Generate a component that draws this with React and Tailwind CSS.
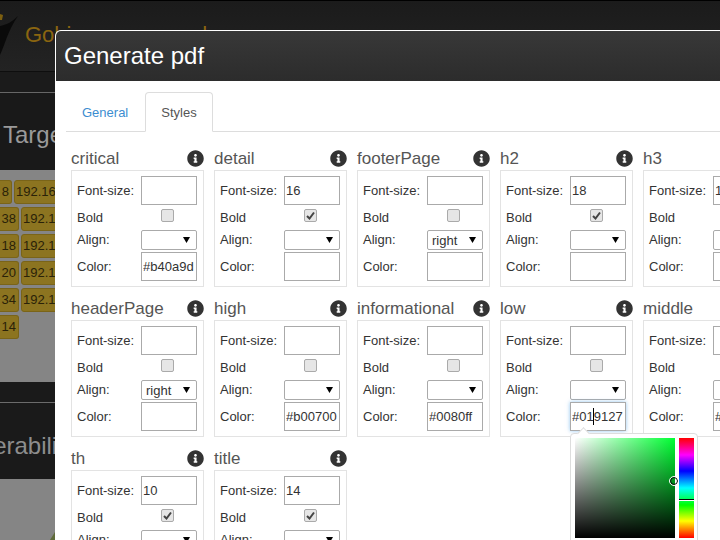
import { FaInfoCircle } from "react-icons/fa";

const styleRows = [
  { name: "critical", color: "#b40a9d" },
  { name: "detail", size: "16", bold: true },
  { name: "footerPage", align: "right" },
  { name: "h2", size: "18", bold: true },
  { name: "h3", size: "16", bold: true },
  { name: "headerPage", align: "right" },
  { name: "high", color: "#b00700" },
  { name: "informational", color: "#0080ff" },
  { name: "low", color: "#019127", picker: true },
  { name: "middle", color: "#ffa500" },
  { name: "th", size: "10", bold: true },
  { name: "title", size: "14", bold: true },
];

const tileRows = [
  { first: "8", w: "w-[12px]", ip: "192.168.1" },
  { first: "38", w: "w-[19px]", ip: "192.168.1" },
  { first: "18", w: "w-[19px]", ip: "192.168.1" },
  { first: "20", w: "w-[19px]", ip: "192.168.1" },
  { first: "34", w: "w-[19px]", ip: "192.168.1" },
  { first: "14", w: "w-[19px]" },
];

function Tile({ className, children }) {
  return (
    <div className={`h-[24px] shrink-0 rounded-[3px] border border-[#7a6418] bg-[#8c7420] text-[13px] leading-[22px] text-[#2a2208] whitespace-nowrap overflow-hidden ${className}`}>
      {children}
    </div>
  );
}

function Background() {
  return (
    <div className="w-[720px] h-[540px] overflow-hidden bg-[#858585]">
      <div className="h-[72px] border-t border-black border-b border-b-[#0e0e0e] bg-linear-to-b from-[#1b1b1b] to-[#232323] flex items-center">
        <svg className="w-[25px] h-[70px] shrink-0" viewBox="0 0 25 70">
          <path d="M0 13 L3 14 L2 19 L0 19 Z" fill="#7d5f10" />
          <path d="M18 15 C12 21 6 24 0 25 L0 54 C5 44 7 31 18 15 Z" fill="#0a0a0a" />
        </svg>
        <span className="w-[215px] shrink-0 text-[22px] text-[#8a6510] whitespace-nowrap -mt-[3px]">Gobierno seguro de</span>
        <nav className="flex gap-[30px] text-[16px] text-[#999] whitespace-nowrap mt-[3px]">
          <span>Vulnerabilities</span>
          <span>Technical overall</span>
          <span>Generate PDF</span>
          <span>Generate report</span>
        </nav>
      </div>
      <div className="h-[21px] bg-[#1b1b1b] border-b border-[#666]" />
      <div className="h-[77px] bg-[#191919] flex items-center pl-[3px] pt-[6px] text-[24px] text-[#9a9a9a] whitespace-nowrap">
        Targets
      </div>
      <div className="h-[212px] pt-[10px] flex flex-col gap-[3px]">
        {tileRows.map((row) => (
          <div key={row.first} className="flex gap-[2px]">
            <Tile className={`${row.w} text-right pr-[2px] rounded-l-none border-l-0`}>{row.first}</Tile>
            {row.ip && <Tile className="w-[100px] pl-[1px]">{row.ip}</Tile>}
          </div>
        ))}
      </div>
      <div className="h-[21px] bg-[#1a1a1a] border-b border-[#6b6b6b]" />
      <div className="h-[76px] bg-[#1a1a1a] flex items-center -ml-[54px] pt-[10px] text-[24px] text-[#8d8d8d] whitespace-nowrap">
        Vulnerabilities
      </div>
      <div className="flex justify-end pr-[665px] pt-[53px]">
        <div className="w-0 h-0 border-l-[5px] border-l-transparent border-b-[8px] border-b-[#5f6b3a]" />
      </div>
    </div>
  );
}

function ColorPicker() {
  return (
    <div className="absolute top-[31px] left-0 z-10 w-[128px] h-[130px] bg-white border border-[#ddd] rounded-[4px] p-[4px] flex gap-[4px]">
      <div className="absolute -top-[5px] left-[8px] w-[9px] h-[9px] rotate-45 bg-white border-l border-t border-[#ddd]" />
      <div className="relative w-[100px] h-[100px] shrink-0 bg-[linear-gradient(to_top,#000,transparent),linear-gradient(to_right,#fff,#00ff33)]">
        <div className="absolute left-[95px] top-[39px] w-[8px] h-[8px] rounded-full border border-black outline outline-white" />
      </div>
      <div className="relative w-[15px] h-[100px] shrink-0 bg-[linear-gradient(to_bottom,#f00,#f0f_17%,#00f_33%,#0ff_50%,#0f0_67%,#ff0_83%,#f00)]">
        <div className="absolute left-0 right-0 top-[61px] h-[2px] bg-[linear-gradient(to_bottom,#000_50%,#fff_50%)]" />
      </div>
    </div>
  );
}

function StyleBox({ name, size, bold, align, color, picker }) {
  const inputClass = "w-[56px] h-[29px] border border-[#aaa] bg-white px-[1px] text-[13px] text-[#333] outline-none";
  return (
    <div>
      <div className="h-[23px] flex items-center justify-between">
        <span className="text-[17px] text-[#555]">{name}</span>
        <FaInfoCircle className="text-[17px] text-[#333]" />
      </div>
      <div className="h-[117px] border border-[#e3e3e3] pl-[5px] pr-[6px] pt-[5px] text-[13px] text-[#333]">
        <div className="h-[29px] flex items-center justify-between">
          <label>Font-size:</label>
          <input className={inputClass} defaultValue={size || ""} />
        </div>
        <div className="h-[25px] flex items-center justify-between">
          <label>Bold</label>
          <div className="w-[56px] h-full flex justify-center pt-[4px] pr-[4px]">
            <div className="relative w-[13px] h-[13px]">
              <input type="checkbox" readOnly checked={!!bold} className="block appearance-none w-[13px] h-[13px] rounded-[2px] border border-[#aaa] bg-[#e6e6e6]" />
              {bold && (
                <svg className="absolute left-[2px] top-[2px] w-[9px] h-[9px]" viewBox="0 0 9 9">
                  <path d="M1 5 L3.5 7.5 L8 1.5" fill="none" stroke="#444" strokeWidth="2" />
                </svg>
              )}
            </div>
          </div>
        </div>
        <div className="h-[20px] mb-[2px] flex items-center justify-between">
          <label>Align:</label>
          <div className="relative w-[56px] h-[20px]">
            <select defaultValue={align || ""} className="block appearance-none w-full h-full border border-[#aaa] rounded-[2px] bg-white pl-[4px] text-[13px] text-[#333] outline-none">
              <option value=""></option>
              <option value="left">left</option>
              <option value="right">right</option>
            </select>
            <svg className="absolute right-[7px] top-[7px] w-[7px] h-[6px]" viewBox="0 0 7 6">
              <path d="M0 0 H7 L3.5 6 Z" fill="#000" />
            </svg>
          </div>
        </div>
        <div className="h-[29px] flex items-center justify-between">
          <label>Color:</label>
          <div className="relative w-[56px] h-[29px]">
            <input
              className={picker ? `${inputClass} border-[#66afe9] shadow-[0_0_4px_rgba(102,175,233,0.7)]` : inputClass}
              defaultValue={color || ""}
            />
            {picker && <div className="absolute left-[23px] top-[6px] w-px h-[17px] bg-black" />}
            {picker && <ColorPicker />}
          </div>
        </div>
      </div>
    </div>
  );
}

function Modal() {
  return (
    <div className="absolute left-[55px] top-[30px] w-[700px] h-[510px] bg-white border-t border-l border-white rounded-tl-[6px] overflow-hidden">
      <div className="h-[50px] bg-linear-to-b from-[#383838] to-[#2c2c2c] flex items-center pl-[8px] text-[24px] text-white">
        Generate pdf
      </div>
      <div className="pl-[10px] pt-[11px]">
        <div className="flex h-[40px] border-b border-[#ddd] text-[13px]">
          <div className="mr-[2px] pl-[16px] pr-[15px] pt-[11px] text-[#3c8dd0]">General</div>
          <div className="h-[40px] px-[15px] pt-[10px] border border-[#ddd] border-b-white rounded-t-[4px] bg-white text-[#555]">Styles</div>
        </div>
        <div className="pl-[5px] pt-[15px] grid grid-cols-[repeat(5,133px)] gap-x-[10px] gap-y-[10px]">
          {styleRows.map((row) => (
            <StyleBox key={row.name} {...row} />
          ))}
        </div>
      </div>
    </div>
  );
}

export default function App() {
  return (
    <div className="relative w-[720px] h-[540px] overflow-hidden font-['Liberation_Sans',Arial,sans-serif]">
      <Background />
      <Modal />
    </div>
  );
}
